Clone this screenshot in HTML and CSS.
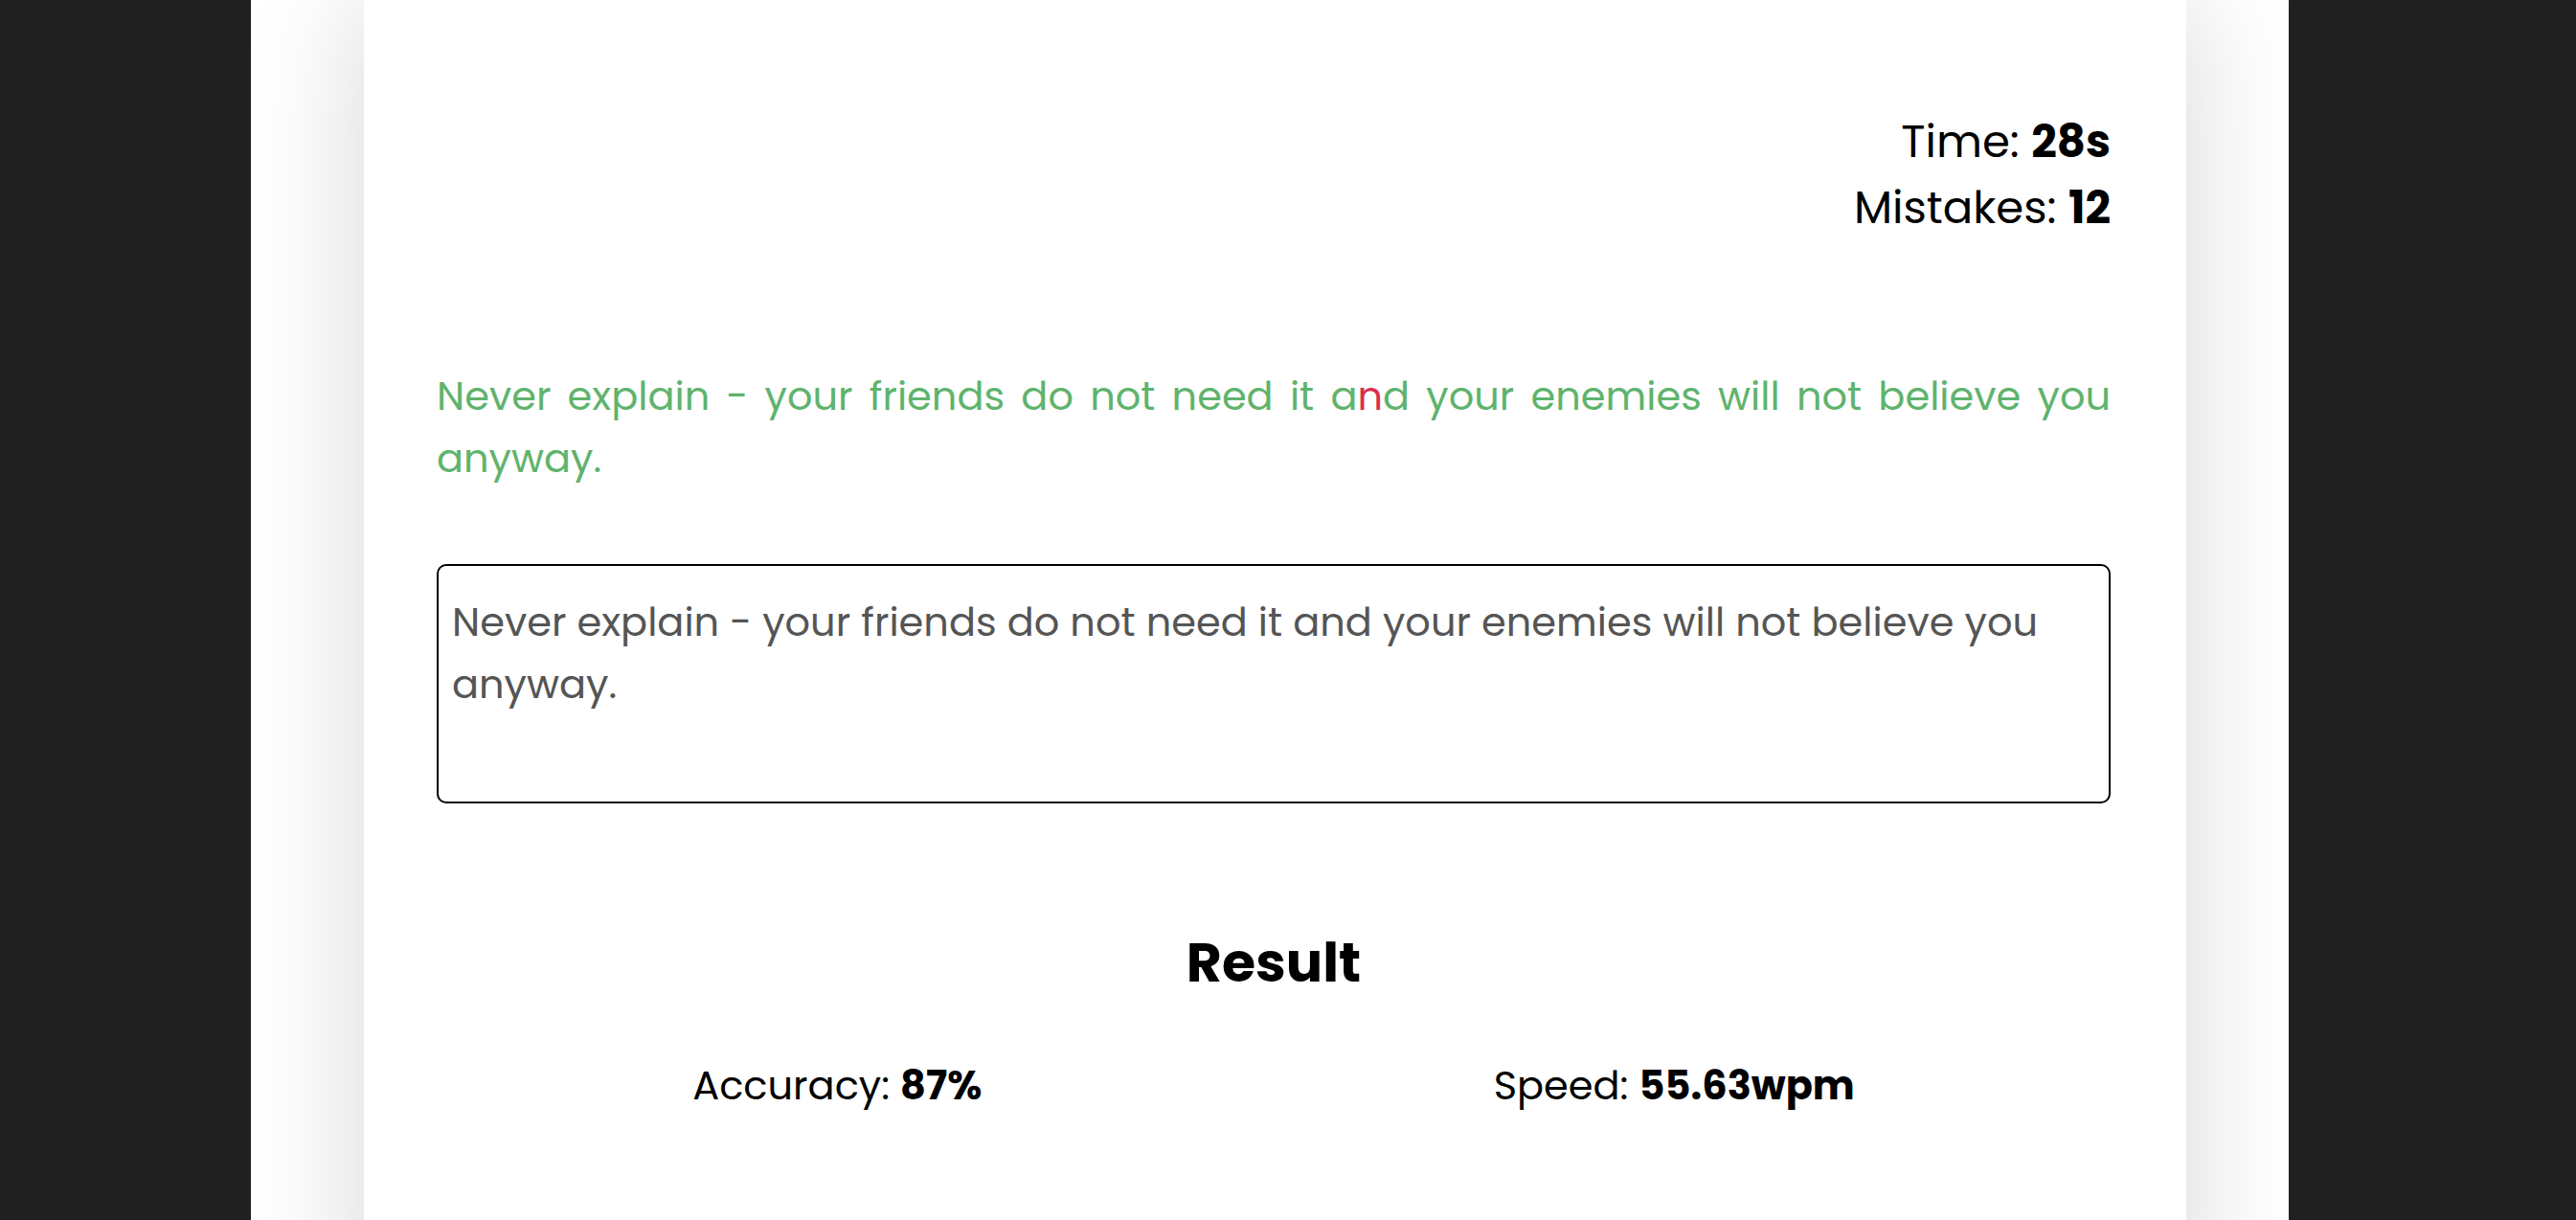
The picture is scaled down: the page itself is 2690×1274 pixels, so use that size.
FILE: index.html
```html
<!DOCTYPE html>
<html lang="en">
<head>
<meta charset="utf-8">
<title>Typing Test</title>
<link rel="stylesheet" href="styles.css">
</head>
<body>
<div class="page">
  <main class="card">
    <div class="stats">
      <div class="stat">Time: <b>28s</b></div>
      <div class="stat">Mistakes: <b>12</b></div>
    </div>
    <p class="quote">Never explain - your friends do not need it a<span class="wrong">n</span>d your enemies will not believe you anyway.</p>
    <textarea class="input" readonly>Never explain - your friends do not need it and your enemies will not believe you anyway.</textarea>
    <section class="result">
      <h2 class="result-title">Result</h2>
      <div class="result-row">
        <div class="result-item">Accuracy: <b>87%</b></div>
        <div class="result-item">Speed: <b>55.63wpm</b></div>
      </div>
    </section>
  </main>
</div>
</body>
</html>
```

FILE: styles.css
```css
html, body {
  margin: 0;
  padding: 0;
}
body {
  background: #202020;
  height: 1274px;
  overflow: hidden;
  font-family: "Poppins", "Open Sans", "Liberation Sans", sans-serif;
  color: #000;
}
.page {
  margin-left: 262px;
  width: 2128px;
  height: 1274px;
  background: #fff;
  overflow: hidden;
}
.card {
  margin-left: 118px;
  width: 1903px;
  box-sizing: border-box;
  min-height: 1400px;
  background: #fff;
  box-shadow: 0 0 120px rgba(0, 0, 0, 0.16);
  padding: 113px 79px 0 76px;
  display: flex;
  flex-direction: column;
}
.stats {
  display: flex;
  flex-direction: column;
  align-items: flex-end;
}
.stat {
  font-size: 46.6px;
  line-height: 69px;
}
.stat b {
  font-weight: 700;
}
.quote {
  margin: 130px 0 0;
  font-size: 41.5px;
  line-height: 65px;
  color: #5fb36d;
  text-align: justify;
}
.wrong {
  color: #d8304e;
}
.input {
  display: block;
  margin: 78px 0 0;
  width: 100%;
  height: 250px;
  box-sizing: border-box;
  border: 2px solid #000;
  border-radius: 10px;
  padding: 26px 14px 0;
  font-family: inherit;
  font-size: 41.5px;
  line-height: 65px;
  color: #555;
  resize: none;
  outline: none;
  overflow: hidden;
}
.result {
  margin-top: 123px;
}
.result-title {
  margin: 0;
  text-align: center;
  font-size: 57px;
  line-height: 87px;
  font-weight: 700;
}
.result-row {
  margin-top: 52px;
  display: flex;
  justify-content: space-around;
}
.result-item {
  font-size: 41.5px;
  line-height: 65px;
}
```
